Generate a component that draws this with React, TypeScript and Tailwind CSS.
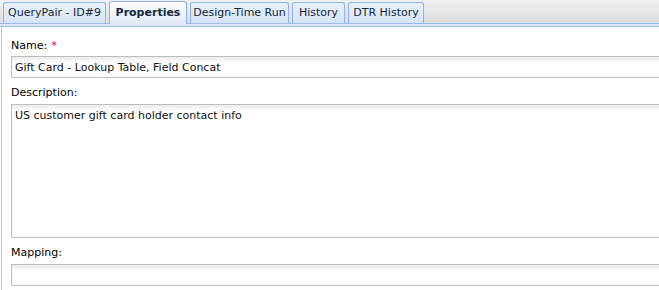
import React from "react";

const tabs = [
  { label: "QueryPair - ID#9", w: "w-[103px]" },
  { label: "Properties", w: "w-[78px]", active: true },
  { label: "Design-Time Run", w: "w-[99px]" },
  { label: "History", w: "w-[53px]" },
  { label: "DTR History", w: "w-[76px]" },
];

function Field({ h, value }: { h: string; value?: string }) {
  return (
    <div
      className={`${h} w-[700px] border border-[#bdbdbd] bg-[linear-gradient(#ececec,#ffffff_6px)] px-[3px] pt-[4px] text-[#111]`}
    >
      {value}
    </div>
  );
}

export default function App() {
  return (
    <div className="w-[659px] h-[290px] overflow-hidden bg-white text-[11px] leading-[14px] text-black font-['DejaVu_Sans',Verdana,sans-serif]">
      <div className="h-[23px] bg-[linear-gradient(#f0f0f0,#dcdcdc)] flex items-end gap-[3px] pl-[3px]">
        {tabs.map((t) =>
          t.active ? (
            <div
              key={t.label}
              className={`${t.w} h-[23px] -mb-[1px] relative z-10 flex items-center justify-center rounded-t-[3px] border border-b-0 border-[#8db2e3] bg-[linear-gradient(#ffffff,#dfe8f6)] font-bold text-[#15283e]`}
            >
              {t.label}
            </div>
          ) : (
            <div
              key={t.label}
              className={`${t.w} h-[21px] flex items-center justify-center rounded-t-[3px] border border-b-0 border-[#8db2e3] bg-[linear-gradient(#e9f0fb,#d6e3f6)] text-[#15283e]`}
            >
              {t.label}
            </div>
          )
        )}
      </div>
      <div className="h-[4px] border-y border-[#99bbe8] bg-[#dfe8f6]" />
      <div className="ml-[1px] h-[263px] border-l border-[#c8c8c8] pl-[9px] pt-[9px] flex flex-col">
        <div className="h-[20px] flex items-center">
          Name: <span className="ml-[4px] text-[#e00]">*</span>
        </div>
        <Field h="h-[22px]" value="Gift Card - Lookup Table, Field Concat" />
        <div className="h-[26px] flex items-center pt-[4px]">Description:</div>
        <Field h="h-[134px]" value="US customer gift card holder contact info" />
        <div className="h-[26px] flex items-center pt-[4px]">Mapping:</div>
        <Field h="h-[22px]" />
      </div>
    </div>
  );
}
